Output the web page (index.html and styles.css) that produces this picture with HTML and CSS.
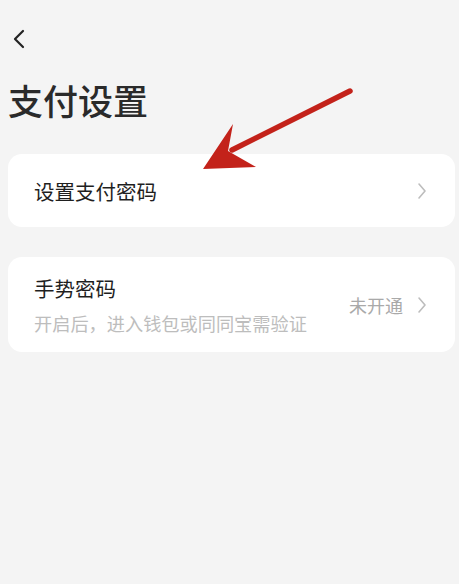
FILE: index.html
```html
<!DOCTYPE html>
<html lang="zh-CN">

<head>
  <meta charset="UTF-8" />
  <meta name="viewport" content="width=device-width, initial-scale=1.0" />
  <title>支付设置</title>
  <link rel="stylesheet" href="styles.css">
</head>

<body>
  <div class="page">
    <div class="top-bar">
      <svg class="back" width="14" height="20" viewBox="0 0 14 20">
        <polyline points="11,2 3,10 11,18" fill="none" stroke="#222" stroke-width="2.2" stroke-linecap="round" stroke-linejoin="round" />
      </svg>
    </div>

    <h1 class="title">支付设置</h1>

    <div class="card row-single">
      <span class="row-title">设置支付密码</span>
      <svg class="chev" width="10" height="18" viewBox="0 0 10 18">
        <polyline points="2,2 8,9 2,16" fill="none" stroke="#bdbdbd" stroke-width="1.6" stroke-linecap="round" stroke-linejoin="round" />
      </svg>
    </div>

    <div class="card row-double">
      <div class="row-text">
        <span class="row-title">手势密码</span>
        <span class="row-sub">开启后，进入钱包或同同宝需验证</span>
      </div>
      <div class="row-right">
        <span class="row-state">未开通</span>
        <svg class="chev" width="10" height="18" viewBox="0 0 10 18">
          <polyline points="2,2 8,9 2,16" fill="none" stroke="#bdbdbd" stroke-width="1.6" stroke-linecap="round" stroke-linejoin="round" />
        </svg>
      </div>
    </div>

    <!-- red pointer drawn over the first row -->
    <svg class="pointer" width="459" height="200" viewBox="0 0 459 200">
      <line x1="350" y1="91" x2="232" y2="150" stroke="#c3221a" stroke-width="5.5" stroke-linecap="round" />
      <polygon points="203,169 233,124 228,151 256,167" fill="#c3221a" />
    </svg>
  </div>
</body>

</html>
```

FILE: styles.css
```css
html,
body {
  margin: 0;
  padding: 0;
}

body {
  font-family: "Noto Sans CJK SC", "Noto Sans", sans-serif;
  background: #f4f4f4;
  color: #222;
  width: 459px;
  min-height: 584px;
}

.page {
  position: relative;
  padding: 0 4px 0 8px;
}

.top-bar {
  height: 50px;
  display: flex;
  align-items: flex-end;
  padding-left: 4px;
  box-sizing: border-box;
}

.back {
  display: block;
  margin-bottom: 1px;
}

.title {
  margin: 25px 0 0 0;
  font-size: 35px;
  line-height: 50px;
  font-weight: 500;
  color: #2a2a2a;
}

.card {
  background: #fff;
  border-radius: 14px;
  display: flex;
  align-items: center;
  justify-content: space-between;
  padding: 0 28px 0 26px;
  box-sizing: border-box;
}

.row-single {
  margin-top: 29px;
  height: 73px;
}

.row-double {
  margin-top: 30px;
  height: 95px;
}

.row-title {
  font-size: 20.5px;
  line-height: 28px;
  color: #1f1f1f;
}

.row-text {
  display: flex;
  flex-direction: column;
  gap: 8px;
}

.row-sub {
  font-size: 18.2px;
  line-height: 26px;
  color: #bdbdbd;
}

.row-right {
  display: flex;
  align-items: center;
  gap: 14px;
}

.row-state {
  font-size: 18px;
  color: #a9a9a9;
}

.chev {
  display: block;
}

.pointer {
  position: absolute;
  left: 0;
  top: 0;
  pointer-events: none;
}
```
